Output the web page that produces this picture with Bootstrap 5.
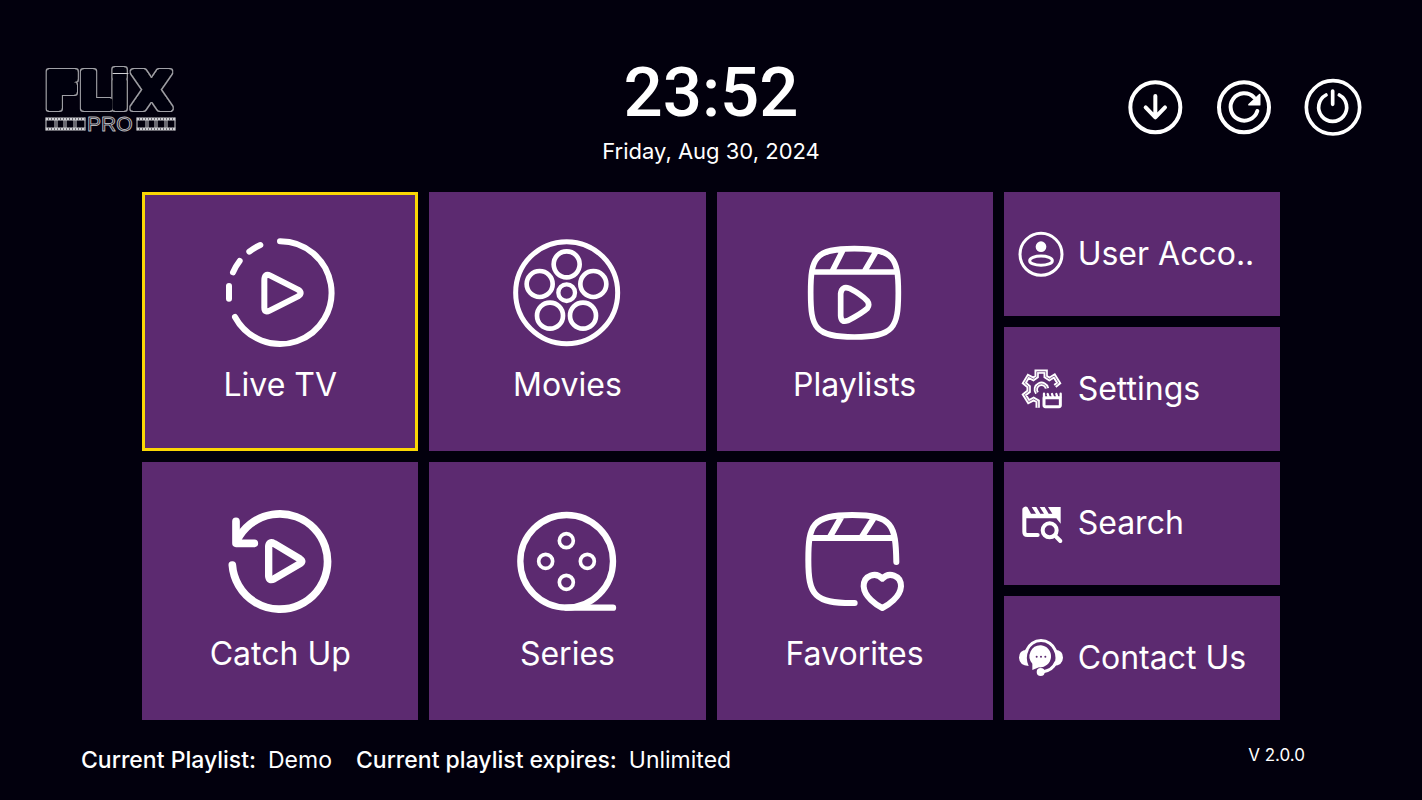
<!DOCTYPE html>
<html lang="en">
<head>
<meta charset="utf-8">
<meta name="viewport" content="width=device-width, initial-scale=1">
<title>Flix Pro</title>
<link href="https://cdn.jsdelivr.net/npm/bootstrap@5.3.0/dist/css/bootstrap.min.css" rel="stylesheet">
<style>
  body { background: #02000d; color: #fff; font-family: Inter, "Open Sans", sans-serif; }
  svg { fill: none; stroke: #fff; stroke-linecap: round; stroke-linejoin: round; }
  button { color: inherit; }
  .top-bar { display: grid; grid-template-columns: 1fr auto 1fr; height: 192px; padding: 0 41px; }
  .logo-word { font: 700 50px "DejaVu Sans", sans-serif; fill: #02000d; stroke: #02000d; stroke-width: 6; }
  .logo-sub { font: 400 21px "Liberation Sans", sans-serif; fill: #02000d; stroke: #b4b4b8; stroke-width: 1; }
  .top-logo { margin-top: 61px; }
  .clock { margin-top: 57px; }
  .clock-time { font-size: 69px; line-height: 72px; font-weight: 500; font-family: Roboto, sans-serif; }
  .clock-date { font-size: 22px; line-height: 28px; margin-top: 8px; }
  .actions { gap: 29px; margin: 77px 18px 0 0; }
  .tiles { width: 80%; display: grid; gap: 11px; grid-template-columns: repeat(4, minmax(0, 1fr)); grid-template-rows: repeat(4, 1fr); }
  .tile { background: #5c2a70; border: 0; font-size: 32px; line-height: 40px; }
  .tile-lg { grid-row: span 2; gap: 12px; padding-bottom: 6px; }
  .tile-sm { grid-column: 4; gap: 13px; padding: 0 13px; white-space: nowrap; }
  .tile.selected { outline: 3px solid #fbd704; outline-offset: -3px; }
  .gap-line { stroke: #5c2a70; }
  .bottom-bar { height: 80px; padding: 24px 117px 0 81px; font-size: 23px; line-height: 32px; }
  .status { gap: 24px; }
  .status-item { gap: 12px; }
  .version { font-size: 17px; line-height: 22px; }
</style>
</head>
<body>
<div class="d-flex flex-column min-vh-100">
  <header class="top-bar">
    <svg class="top-logo" width="140" height="76" viewBox="0 0 140 76" role="img" aria-label="Flix Pro">
      <defs>
        <filter id="rim" x="-5%" y="-10%" width="110%" height="120%">
          <feMorphology in="SourceAlpha" operator="dilate" radius="1" result="wide"/>
          <feFlood flood-color="#a0a0a6"/>
          <feComposite in2="wide" operator="in" result="edge"/>
          <feMerge><feMergeNode in="edge"/><feMergeNode in="SourceGraphic"/></feMerge>
        </filter>
      </defs>
      <g filter="url(#rim)"><text class="logo-word" x="4" y="47">FLi<tspan dx="4">X</tspan></text></g>
      <path d="M72 12.500h15" stroke="#d0d0d4"/>
      <text class="logo-sub" x="46" y="70">PRO</text>
      <g stroke="#d0d0d4" stroke-width="1">
        <path d="M5 57h39M5 69h39M5 59h39M5 67h39M5 57v12M14 59v8M16 59v8M23 59v8M25 59v8M33 59v8M35 59v8M44 57v12"/>
        <path d="M96 57h38M96 69h38M96 59h38M96 67h38M96 57v12M105 59v8M107 59v8M114 59v8M116 59v8M124 59v8M126 59v8M134 57v12"/>
        <path stroke-width="2" stroke-linecap="butt" stroke-dasharray="2 1" d="M5 58h39M5 68h39M96 58h38M96 68h38"/>
      </g>
    </svg>
    <div class="clock text-center">
      <div class="clock-time">23:52</div>
      <div class="clock-date">Friday, Aug 30, 2024</div>
    </div>
    <div class="actions d-flex justify-content-end align-items-start">
      <button type="button" class="btn p-0 border-0 lh-1" aria-label="Download">
        <svg width="60" height="60" viewBox="30 37 180 180" stroke-width="12"><circle cx="121" cy="128" r="75"/><path d="M121 94V158M92 128l29 30 29-30"/></svg>
      </button>
      <button type="button" class="btn p-0 border-0 lh-1" aria-label="Refresh">
        <svg width="60" height="60" viewBox="297 37 180 180" stroke-width="12"><circle cx="387" cy="128" r="75"/><path d="M427 139A41 41 0 1 1 417 98"/><path d="M434 90v30h-32z" fill="#fff" stroke-width="5"/></svg>
      </button>
      <button type="button" class="btn p-0 border-0 lh-1" aria-label="Power">
        <svg width="60" height="60" viewBox="565 37 180 180" stroke-width="11"><circle cx="655" cy="128" r="80"/><path d="M634 91A42 42 0 1 0 674 91M654 79v40"/></svg>
      </button>
    </div>
  </header>

  <main class="tiles flex-grow-1 mx-auto">
    <button type="button" class="tile tile-lg selected text-white d-flex flex-column align-items-center justify-content-center">
      <svg width="120" height="120" viewBox="30 21 360 360" stroke-width="18"><path d="M210 46A154 154 0 1 1 75 273M57 218V180M69 139q7-17 20-34M118 77q15-12 33-20M163 163V245Q163 262 179 254L264 211Q280 201 264 191L181 149Q163 140 163 163Z"/></svg>
      <span>Live TV</span>
    </button>
    <button type="button" class="tile tile-lg text-white d-flex flex-column align-items-center justify-content-center">
      <svg width="120" height="120" viewBox="21 21 360 360" stroke-width="15"><circle cx="200" cy="200" r="153"/><g stroke-width="14"><circle cx="200" cy="115" r="39"/><circle cx="119" cy="174" r="39"/><circle cx="280" cy="174" r="39"/><circle cx="150" cy="269" r="39"/><circle cx="249" cy="269" r="39"/><circle cx="200" cy="200" r="25" stroke-width="13"/></g></svg>
      <span>Movies</span>
    </button>
    <button type="button" class="tile tile-lg text-white d-flex flex-column align-items-center justify-content-center">
      <svg width="120" height="120" viewBox="43 21 360 360" stroke-width="17"><path d="M221 68C340 68 353 95 353 200S340 333 221 333 90 305 90 200 102 68 221 68ZM95 138H348M187 72L155 135M287 75L252 135M180 203V269Q181 291 201 284Q242 263 260 247Q268 236 260 225Q240 204 206 187Q183 179 180 203Z"/></svg>
      <span>Playlists</span>
    </button>
    <button type="button" class="tile tile-sm text-white d-flex align-items-center">
      <svg width="48" height="48" viewBox="49 30 144 144" stroke-width="9"><circle cx="121" cy="103" r="63"/><circle cx="121" cy="80" r="16" fill="#fff" stroke="none"/><ellipse cx="121" cy="122" rx="34" ry="14"/></svg>
      <span>User Acco..</span>
    </button>
    <button type="button" class="tile tile-sm text-white d-flex align-items-center">
      <svg width="48" height="48" viewBox="49 432 144 144"><path stroke-width="13" stroke-linecap="butt" stroke-linejoin="miter" d="M111 560V541L99 534 84 542 71 521 84 511V497L71 486 83 466 98 474 108 467V452H135V467L146 474 161 465 174 486 163 495M109 516A17 17 0 1 1 139 502"/><path class="gap-line" stroke-width="2" stroke-linecap="butt" stroke-linejoin="miter" d="M111 560V541L99 534 84 542 71 521 84 511V497L71 486 83 466 98 474 108 467V452H135V467L146 474 161 465 174 486 163 495M109 516A17 17 0 1 1 139 502"/><path stroke-width="9" d="M130 530V553Q130 557 134 557H175Q179 557 179 553V530Z"/><path stroke-width="7" d="M130 528V518M144 528l-3-9M157 528l-3-9M170 528l-3-9M180 528V518"/></svg>
      <span>Settings</span>
    </button>
    <button type="button" class="tile tile-lg text-white d-flex flex-column align-items-center justify-content-center">
      <svg width="120" height="120" viewBox="60 21 360 360" stroke-width="23"><path d="M97 210A143 143 0 1 0 111 137"/><path d="M108 79V145H163"/><path d="M206 154V243Q207 259 223 251L300 206Q311 199 300 192L223 146Q207 138 206 154Z" stroke-width="22"/></svg>
      <span>Catch Up</span>
    </button>
    <button type="button" class="tile tile-lg text-white d-flex flex-column align-items-center justify-content-center">
      <svg width="120" height="120" viewBox="21 21 360 360" stroke-width="19"><circle cx="200" cy="199" r="139"/><path d="M200 338H339"/><path d="M215 333L255 325V336Z" fill="#fff" stroke-width="6"/><g stroke-width="11"><circle cx="199" cy="137" r="21"/><circle cx="137" cy="199" r="21"/><circle cx="262" cy="199" r="21"/><circle cx="199" cy="262" r="21"/></g></svg>
      <span>Series</span>
    </button>
    <button type="button" class="tile tile-lg text-white d-flex flex-column align-items-center justify-content-center">
      <svg width="120" height="120" viewBox="58 21 360 360" stroke-width="18"><path d="M237 324C115 326 98 300 98 195S109 60 230 60 360 90 362 201M103 129H356M197 66L163 125M295 68L259 125"/><path d="M320 251C301 230 264 240 264 274C266 306 303 331 320 339C337 331 374 306 376 274C376 240 339 230 320 251Z"/></svg>
      <span>Favorites</span>
    </button>
    <button type="button" class="tile tile-sm text-white d-flex align-items-center">
      <svg width="48" height="48" viewBox="49 30 144 144" stroke-width="12"><path d="M111 138H80Q71 138 71 129V62"/><path d="M66 58Q72 50 80 54L91 74H106L93 54H107L119 74H130L117 54H132L144 74H155L142 54H180V104L167 88H72Z" fill="#fff" stroke="none"/><circle cx="147" cy="124" r="21"/><path d="M163 140l16 16"/></svg>
      <span>Search</span>
    </button>
    <button type="button" class="tile tile-sm text-white d-flex align-items-center">
      <svg width="48" height="48" viewBox="49 432 144 144" stroke-width="9"><path d="M78 481A46 46 0 0 1 164 481M165 518Q156 541 125 546"/><path d="M78 479Q55 480 55 503Q56 526 84 528Q73 503 84 481ZM164 479Q187 480 187 503Q186 526 159 528Q170 503 159 481Z" fill="#fff" stroke="none"/><circle cx="120" cy="546" r="12" fill="#fff" stroke="none"/><path d="M121 466A33 33 0 1 1 115 532L95 540V521A33 33 0 0 1 121 466Z" fill="#fff" stroke="none"/><path class="gap-line" stroke-width="6" d="M108 500h0M121 500h0M134 500h0"/></svg>
      <span>Contact Us</span>
    </button>
  </main>

  <footer class="bottom-bar d-flex justify-content-between align-items-start">
    <div class="status d-flex flex-wrap">
      <div class="status-item d-flex"><span class="fw-medium">Current Playlist:</span><span>Demo</span></div>
      <div class="status-item d-flex"><span class="fw-medium">Current playlist expires:</span><span>Unlimited</span></div>
    </div>
    <div class="version">V 2.0.0</div>
  </footer>
</div>
<script src="https://cdn.jsdelivr.net/npm/bootstrap@5.3.0/dist/js/bootstrap.bundle.min.js"></script>
</body>
</html>
